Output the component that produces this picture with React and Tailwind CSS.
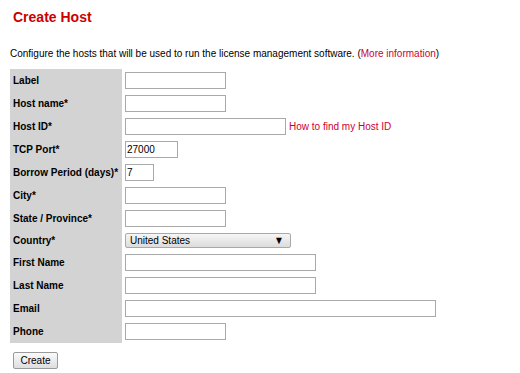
import React from "react";

const rows = [
  { label: "Label", w: "w-[101px]" },
  { label: "Host name*", w: "w-[101px]" },
  { label: "Host ID*", w: "w-[161px]", link: true },
  { label: "TCP Port*", w: "w-[53px]", value: "27000" },
  { label: "Borrow Period (days)*", w: "w-[29px]", value: "7" },
  { label: "City*", w: "w-[101px]" },
  { label: "State / Province*", w: "w-[101px]" },
  { label: "Country*", select: true },
  { label: "First Name", w: "w-[191px]" },
  { label: "Last Name", w: "w-[191px]" },
  { label: "Email", w: "w-[311px]" },
  { label: "Phone", w: "w-[101px]" },
];

export default function App() {
  return (
    <div className="w-[520px] h-[373px] bg-white text-black font-['Liberation_Sans',Arial,sans-serif] text-[10px] pt-[9px] overflow-hidden">
      <h1 className="ml-[13px] text-[14px] leading-[16px] font-bold text-[#cc0000]">Create Host</h1>
      <p className="ml-[10px] mt-[23px] leading-[12px] text-black">
        Configure the hosts that will be used to run the license management software. (
        <span className="text-[#cc0033]">More information</span>)
      </p>
      <div className="ml-[10px] mt-[9px] grid grid-cols-[112px_auto] w-fit">
        {rows.map((r) => (
          <React.Fragment key={r.label}>
            <div
              className={`bg-[#d3d3d3] pl-[3px] flex items-center font-bold text-black ${
                r.select ? "h-[21px]" : "h-[23px]"
              }`}
            >
              {r.label}
            </div>
            <div className={`pl-[3px] flex items-center gap-[3px] ${r.select ? "h-[21px]" : "h-[23px]"}`}>
              {r.select ? (
                <div className="w-[166px] h-[15px] border border-[#a9a9a9] rounded-[2px] bg-gradient-to-b from-[#f6f6f6] to-[#dcdcdc] flex items-center justify-between pl-[4px] pr-[6px]">
                  <span className="text-black leading-[13px]">United States</span>
                  <span className="text-[10px] leading-[10px] text-black scale-y-[1.1]">▼</span>
                </div>
              ) : (
                <div className={`${r.w} h-[17px] border border-[#a9a9a9] bg-white flex items-center pl-[1px] text-black`}>
                  {r.value || ""}
                </div>
              )}
              {r.link && <span className="text-[#cc0033]">How to find my Host ID</span>}
            </div>
          </React.Fragment>
        ))}
      </div>
      <button className="ml-[13px] mt-[9px] w-[45px] h-[17px] border border-[#9a9a9a] rounded-[2px] bg-gradient-to-b from-[#fafafa] to-[#dedede] text-[10px] leading-[15px] text-black flex items-center justify-center">
        Create
      </button>
    </div>
  );
}
